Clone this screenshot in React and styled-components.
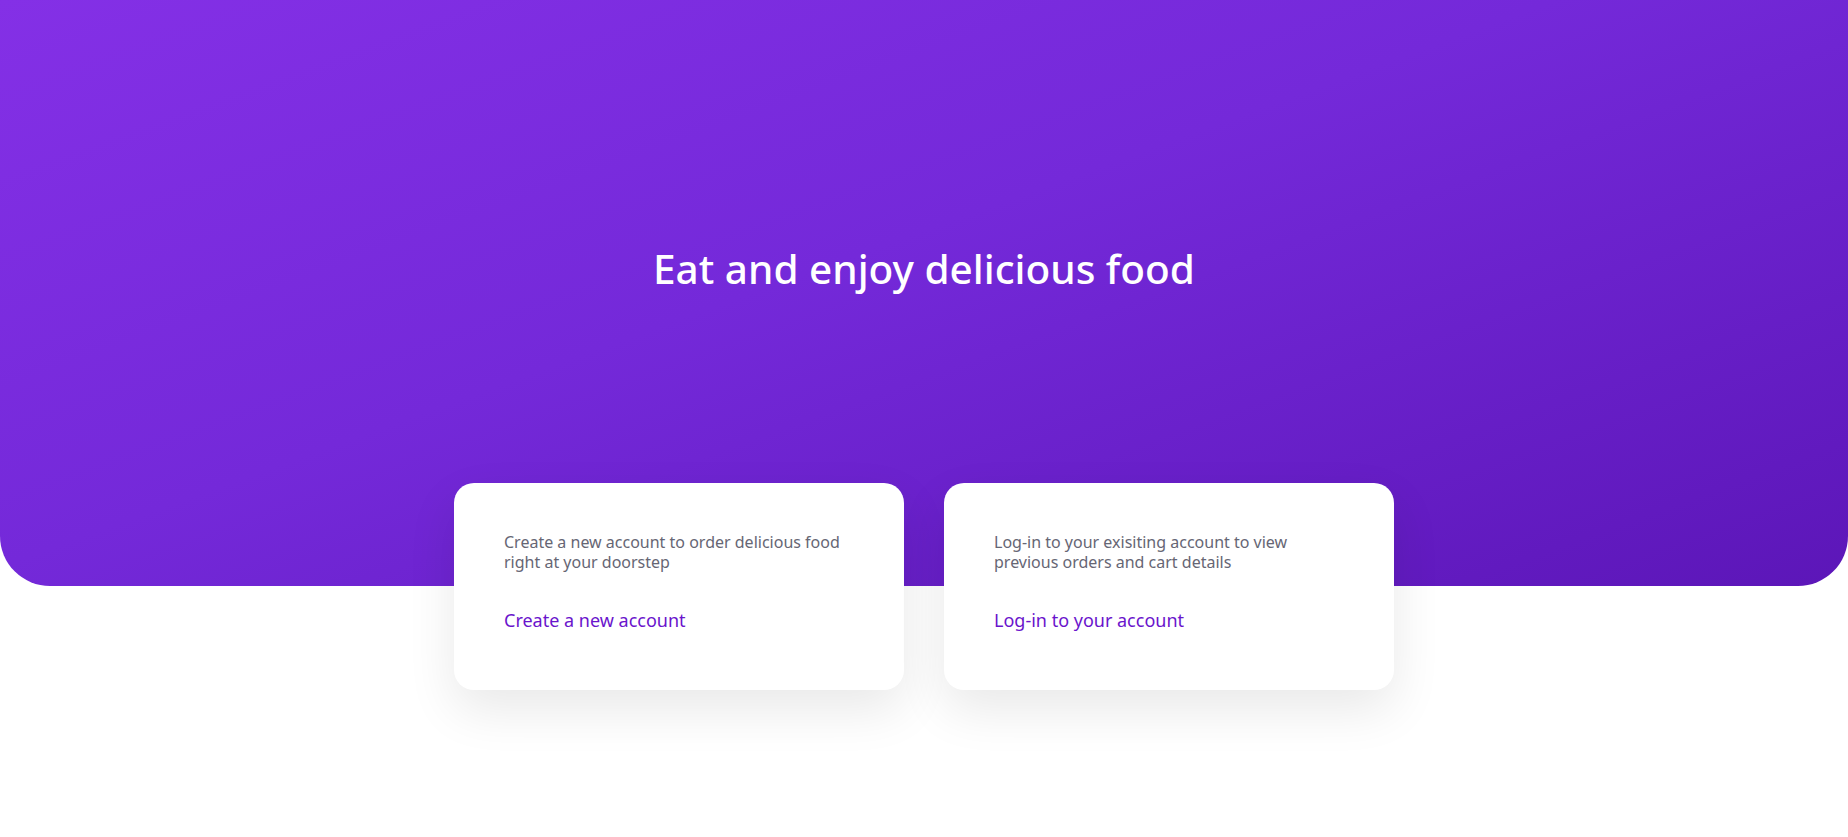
import React from 'react'
import styled, { createGlobalStyle } from 'styled-components'

const GlobalStyle = createGlobalStyle`
   * {
      box-sizing: border-box;
   }
   body {
      margin: 0;
      background: #ffffff;
      font-family: "Noto Sans", "Open Sans", sans-serif;
   }
`

const cards = [
   {
      lines: ['Create a new account to order delicious food', 'right at your doorstep'],
      link: 'Create a new account',
   },
   {
      lines: ['Log-in to your exisiting account to view', 'previous orders and cart details'],
      link: 'Log-in to your account',
   },
]

const App = () => {
   return (
      <Page>
         <GlobalStyle />
         <Hero>
            <Title>Eat and enjoy delicious food</Title>
         </Hero>
         <CardRow>
            {cards.map((c) => (
               <Card key={c.link}>
                  <Description>
                     {c.lines[0]}
                     <br />
                     {c.lines[1]}
                  </Description>
                  <CardLink href="#">{c.link}</CardLink>
               </Card>
            ))}
         </CardRow>
      </Page>
   )
}

const Page = styled.div`
   min-height: 837px;
   display: flex;
   flex-direction: column;
`

const Hero = styled.header`
   height: 586px;
   padding-top: 241px;
   display: flex;
   justify-content: center;
   background: linear-gradient(160deg, #8430e6 0%, #7429d9 45%, #5c16b8 100%);
   border-radius: 0 0 50px 50px;
`

const Title = styled.h1`
   margin: 0;
   color: #ffffff;
   font-size: 40.5px;
   line-height: 56px;
   font-weight: 500;
`

const CardRow = styled.section`
   display: flex;
   justify-content: center;
   gap: 40px;
   margin-top: -103px;
`

const Card = styled.div`
   width: 450px;
   height: 207px;
   padding: 49px 50px;
   background: #ffffff;
   border-radius: 20px;
   box-shadow: 0 20px 50px rgba(0, 0, 0, 0.09);
`

const Description = styled.p`
   margin: 0;
   color: #666674;
   font-size: 16px;
   line-height: 20px;
`

const CardLink = styled.a`
   display: block;
   margin-top: 36px;
   color: #6a14cc;
   font-size: 18px;
   line-height: 25px;
   text-decoration: none;
`

export default App
